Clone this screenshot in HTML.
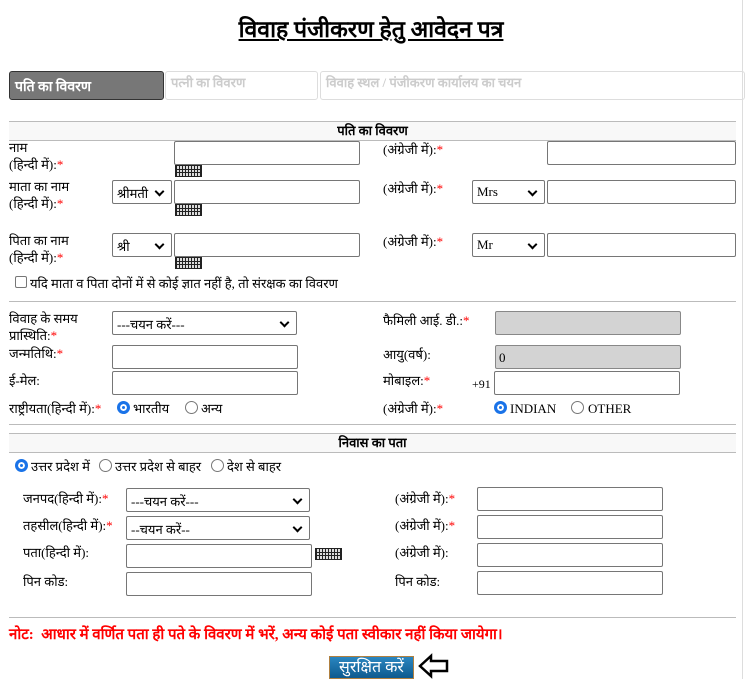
<!DOCTYPE html>
<html><head><meta charset="utf-8"><style>
body{margin:0;width:750px;height:679px;position:relative;background:#fff;font-family:"Liberation Serif",serif;font-size:13px;color:#000;overflow:hidden}
.a{position:absolute;white-space:nowrap}
.in{position:absolute;border:1px solid #767676;background:#fff;box-sizing:border-box;border-radius:2px}
.sel{position:absolute;border:1px solid #767676;background:#fff;box-sizing:border-box;border-radius:2px;padding:3px 0 0 4px;font-size:13px}
.sel:after{content:"";position:absolute;right:8px;top:7px;width:5px;height:5px;border-right:2px solid #000;border-bottom:2px solid #000;transform:rotate(45deg)}
.dis{background:#d3d3d3;border-color:#888}
.r{color:red}
.kb{position:absolute;width:27px;height:12px;background:repeating-linear-gradient(90deg,#222 0 1px,#ddd 1px 3px);border:1px solid #222;box-sizing:border-box}
.kb:after{content:"";position:absolute;left:0;right:0;top:3px;height:1px;background:#222;box-shadow:0 3px #222}
.hr{position:absolute;left:9px;width:727px;height:1px;background:#bbb}
.band{position:absolute;left:9px;width:727px;height:18px;background:#f8f8f8;border-top:1px solid #bbb;border-bottom:1px solid #bbb;font-weight:bold;text-align:center;line-height:18px}
.rad{position:absolute;width:13px;height:13px;border:1px solid #777;border-radius:50%;box-sizing:border-box;background:#fff}
.rad.on{border:3px solid #1a73e8;box-shadow:inset 0 0 0 2px #fff;background:#1a73e8}
</style></head><body>
<div class="a" style="left:0;width:742px;text-align:center;top:12px;font-size:23px;font-weight:bold;text-decoration:underline">विवाह पंजीकरण हेतु आवेदन पत्र</div>
<div style="position:absolute;left:742px;top:0;width:1px;height:679px;background:#ddd"></div>
<div style="position:absolute;left:9px;top:71px;width:155px;height:29px;background:#777;border:1px solid #333;border-radius:3px;box-sizing:border-box;color:#fff;font-weight:bold;font-size:14px;padding:5px 0 0 5px">पति का विवरण</div>
<div style="position:absolute;left:165px;top:71px;width:153px;height:29px;border:1px solid #ddd;border-radius:3px;box-sizing:border-box;color:#ccc;font-weight:bold;font-size:13px;padding:1px 0 0 5px">पत्नी का विवरण</div>
<div style="position:absolute;left:320px;top:71px;width:425px;height:29px;border:1px solid #ddd;border-radius:3px;box-sizing:border-box;color:#ccc;font-weight:bold;font-size:13px;padding:1px 0 0 5px">विवाह स्थल / पंजीकरण कार्यालय का चयन</div>

<div class="band" style="top:121px">पति का विवरण</div>
<div class="a" style="left:9px;top:139px;line-height:17px">नाम<br>(हिन्दी में):<span class="r">*</span></div>
<div class="in" style="left:174px;top:141px;width:186px;height:24px"></div><div class="kb" style="left:175px;top:165px"></div>
<div class="a" style="left:383px;top:140px">(अंग्रेजी में):<span class="r">*</span></div>
<div class="in" style="left:547px;top:141px;width:189px;height:24px"></div>

<div class="a" style="left:9px;top:178px;line-height:17px">माता का नाम<br>(हिन्दी में):<span class="r">*</span></div>
<div class="sel" style="left:112px;top:180px;width:60px;height:24px">श्रीमती</div>
<div class="in" style="left:174px;top:180px;width:186px;height:24px"></div><div class="kb" style="left:175px;top:204px"></div>
<div class="a" style="left:383px;top:179px">(अंग्रेजी में):<span class="r">*</span></div>
<div class="sel" style="left:472px;top:180px;width:73px;height:24px">Mrs</div>
<div class="in" style="left:547px;top:180px;width:189px;height:24px"></div>

<div class="a" style="left:9px;top:232px;line-height:17px">पिता का नाम<br>(हिन्दी में):<span class="r">*</span></div>
<div class="sel" style="left:112px;top:233px;width:60px;height:24px">श्री</div>
<div class="in" style="left:174px;top:233px;width:186px;height:24px"></div><div class="kb" style="left:175px;top:257px"></div>
<div class="a" style="left:383px;top:232px">(अंग्रेजी में):<span class="r">*</span></div>
<div class="sel" style="left:472px;top:233px;width:73px;height:24px">Mr</div>
<div class="in" style="left:547px;top:233px;width:189px;height:24px"></div>

<div style="position:absolute;left:15px;top:276px;width:12px;height:12px;border:1px solid #777;border-radius:2px;box-sizing:border-box"></div>
<div class="a" style="left:30px;top:274px">यदि माता व पिता दोनों में से कोई ज्ञात नहीं है, तो संरक्षक का विवरण</div>
<div class="hr" style="top:301px"></div>

<div class="a" style="left:9px;top:310px;line-height:17px">विवाह के समय<br>प्रास्थिति:<span class="r">*</span></div>
<div class="sel" style="left:112px;top:311px;width:185px;height:24px">---चयन करें---</div>
<div class="a" style="left:383px;top:311px">फैमिली आई. डी.:<span class="r">*</span></div>
<div class="in dis" style="left:495px;top:311px;width:186px;height:24px"></div>
<div class="a" style="left:9px;top:344px">जन्मतिथि:<span class="r">*</span></div>
<div class="in" style="left:112px;top:345px;width:186px;height:24px"></div>
<div class="a" style="left:383px;top:345px">आयु(वर्ष):</div>
<div class="in dis" style="left:495px;top:345px;width:186px;height:24px;padding:4px 0 0 3px">0</div>
<div class="a" style="left:9px;top:371px">ई-मेल:</div>
<div class="in" style="left:112px;top:371px;width:186px;height:24px"></div>
<div class="a" style="left:383px;top:371px">मोबाइल:<span class="r">*</span></div>
<div class="a" style="left:472px;top:377px;font-size:12px">+91</div>
<div class="in" style="left:494px;top:371px;width:186px;height:24px"></div>
<div class="a" style="left:9px;top:399px">राष्ट्रीयता(हिन्दी में):<span class="r">*</span></div>
<div class="rad on" style="left:117px;top:401px"></div><div class="a" style="left:133px;top:399px">भारतीय</div>
<div class="rad" style="left:185px;top:401px"></div><div class="a" style="left:201px;top:399px">अन्य</div>
<div class="a" style="left:383px;top:399px">(अंग्रेजी में):<span class="r">*</span></div>
<div class="rad on" style="left:494px;top:401px"></div><div class="a" style="left:510px;top:401px">INDIAN</div>
<div class="rad" style="left:571px;top:401px"></div><div class="a" style="left:588px;top:401px">OTHER</div>
<div class="hr" style="top:424px"></div>

<div class="band" style="top:433px">निवास का पता</div>
<div class="rad on" style="left:15px;top:459px"></div><div class="a" style="left:31px;top:457px">उत्तर प्रदेश में</div>
<div class="rad" style="left:99px;top:459px"></div><div class="a" style="left:115px;top:457px">उत्तर प्रदेश से बाहर</div>
<div class="rad" style="left:211px;top:459px"></div><div class="a" style="left:227px;top:457px">देश से बाहर</div>

<div class="a" style="left:23px;top:489px">जनपद(हिन्दी में):<span class="r">*</span></div>
<div class="sel" style="left:126px;top:488px;width:184px;height:24px">---चयन करें---</div>
<div class="a" style="left:395px;top:489px">(अंग्रेजी में):<span class="r">*</span></div>
<div class="in" style="left:477px;top:487px;width:186px;height:24px"></div>
<div class="a" style="left:23px;top:516px">तहसील(हिन्दी में):<span class="r">*</span></div>
<div class="sel" style="left:126px;top:516px;width:184px;height:24px">--चयन करें--</div>
<div class="a" style="left:395px;top:516px">(अंग्रेजी में):<span class="r">*</span></div>
<div class="in" style="left:477px;top:515px;width:186px;height:24px"></div>
<div class="a" style="left:23px;top:543px">पता(हिन्दी में):</div>
<div class="in" style="left:126px;top:544px;width:186px;height:24px"></div><div class="kb" style="left:315px;top:548px"></div>
<div class="a" style="left:395px;top:543px">(अंग्रेजी में):</div>
<div class="in" style="left:477px;top:543px;width:186px;height:24px"></div>
<div class="a" style="left:23px;top:572px">पिन कोड:</div>
<div class="in" style="left:126px;top:572px;width:186px;height:24px"></div>
<div class="a" style="left:395px;top:572px">पिन कोड:</div>
<div class="in" style="left:477px;top:571px;width:186px;height:24px"></div>
<div class="hr" style="top:617px"></div>

<div class="a" style="left:9px;top:624px;color:#f00;font-weight:bold;font-size:15px">नोट:&nbsp; आधार में वर्णित पता ही पते के विवरण में भरें, अन्य कोई पता स्वीकार नहीं किया जायेगा।</div>
<div style="position:absolute;left:329px;top:656px;width:85px;height:23px;background:linear-gradient(#2a86c0,#0e5a8e);border:1px solid #b08040;box-sizing:border-box;color:#fff;font-size:16px;text-align:center;line-height:21px">सुरक्षित करें</div>
<svg style="position:absolute;left:418px;top:653px" width="32" height="26" viewBox="0 0 32 26"><path d="M2 13 L13 3 L13 8 L29 8 L29 18 L13 18 L13 23 Z" fill="#fff" stroke="#000" stroke-width="2.5" stroke-linejoin="miter"/></svg>
</body></html>
